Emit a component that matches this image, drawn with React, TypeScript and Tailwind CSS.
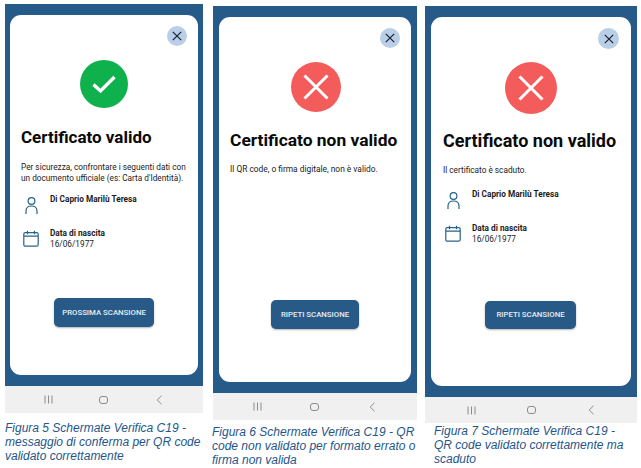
const PersonIcon = () => (
  <span className="mt-[2px] flex w-[16px] shrink-0 justify-center">
    <svg width="13" height="17" viewBox="0 0 13 17" fill="none" stroke="#2a6286" strokeWidth="1.2">
      <circle cx="6.5" cy="4" r="3.4" />
      <path d="M1 17v-3c0-3 2-5 5.5-5s5.5 2 5.5 5v3" />
    </svg>
  </span>
)

const CalendarIcon = () => (
  <svg width="16" height="17" viewBox="0 0 16 17" fill="none" stroke="#2a6286" strokeWidth="1.2" className="mt-[1px] shrink-0">
    <rect x="0.8" y="2.6" width="14.4" height="13.6" rx="1.5" />
    <path d="M0.8 6.2h14.4M4.5 0.8v3.4M11.5 0.8v3.4" />
  </svg>
)

const CheckMark = () => (
  <svg width="26" height="20" viewBox="0 0 26 20" fill="none" stroke="white" strokeWidth="3.4">
    <path d="M2.5 10.5l7 6.5L23.5 3" />
  </svg>
)

const CrossMark = () => (
  <svg width="26" height="26" viewBox="0 0 26 26" fill="none" stroke="white" strokeWidth="3">
    <path d="M1.5 1.5l23 23M24.5 1.5l-23 23" />
  </svg>
)

const CloseButton = ({ className }: { className: string }) => (
  <div className={`absolute flex items-center justify-center rounded-full bg-[#b9cfe8] ${className}`}>
    <svg width="10" height="10" viewBox="0 0 10 10" fill="none" stroke="#16202c" strokeWidth="1.2">
      <path d="M0.8 0.8l8.4 8.4M9.2 0.8l-8.4 8.4" />
    </svg>
  </div>
)

const NavBar = ({ className }: { className: string }) => (
  <div className={`grid grid-cols-3 items-center bg-[#f0f0f0] px-4 ${className}`}>
    <svg width="9" height="9" viewBox="0 0 9 9" stroke="#8b8b8b" strokeWidth="1" className="justify-self-center">
      <path d="M1 0.5v8M4.5 0.5v8M8 0.5v8" />
    </svg>
    <div className="h-[8px] w-[9px] justify-self-center rounded-[3px] border border-[#8b8b8b]" />
    <svg width="7" height="10" viewBox="0 0 7 10" fill="none" stroke="#8b8b8b" strokeWidth="1" className="justify-self-center">
      <path d="M5.5 0.8L1.2 5l4.3 4.2" />
    </svg>
  </div>
)

const InfoRows = ({ className }: { className: string }) => (
  <div className={`font-['Roboto',sans-serif] text-[8.25px] leading-[11px] text-[#1c1c1c] ${className}`}>
    <div className="flex items-start gap-[11px]">
      <PersonIcon />
      <p className="-mt-[1px] font-bold">Di Caprio Marilù Teresa</p>
    </div>
    <div className="mt-[15px] flex items-start gap-[11px]">
      <CalendarIcon />
      <div className="-mt-[1px]">
        <p className="font-bold">Data di nascita</p>
        <p>16/06/1977</p>
      </div>
    </div>
  </div>
)

const ActionButton = ({ label, className }: { label: string; className: string }) => (
  <div className={`flex items-center justify-center rounded-[5px] bg-[#275a87] font-['Roboto',sans-serif] text-[7.8px] font-medium text-[#e8eef4] shadow-[0_1px_2px_rgba(0,0,0,0.3)] ${className}`}>
    {label}
  </div>
)

const Caption = ({ children, className }: { children: React.ReactNode; className: string }) => (
  <p className={`font-['Liberation_Sans',sans-serif] text-[12px] leading-[14px] italic text-[#24558a] ${className}`}>
    {children}
  </p>
)

export default function App() {
  return (
    <div className="flex h-[468px] w-[641px] items-start overflow-hidden bg-white">
      <div className="ml-[5px] mt-[4px] w-[198px]">
        <div className="h-[382px] bg-[#265a88] px-[5px] pt-[11px]">
          <div className="relative flex h-[360px] flex-col rounded-[11px] bg-white pl-[11px]">
            <CloseButton className="right-[11px] top-[11px] h-[20px] w-[20px]" />
            <div className="ml-[59px] mt-[45px] flex h-[48px] w-[48px] items-center justify-center rounded-full bg-[#0fb14c]">
              <CheckMark />
            </div>
            <h1 className="mt-[17px] font-['Roboto',sans-serif] text-[17px] leading-[24px] font-bold whitespace-nowrap text-[#0a0a0a]">
              Certificato valido
            </h1>
            <p className="mt-[13px] font-['Roboto',sans-serif] text-[8.25px] leading-[11px] whitespace-nowrap text-[#222]">
              Per sicurezza, confrontare i seguenti dati con
              <br />
              un documento ufficiale (es: Carta d'Identità).
            </p>
            <InfoRows className="ml-[2px] mt-[11px]" />
            <ActionButton label="PROSSIMA SCANSIONE" className="ml-[33px] mt-[48px] h-[29px] w-[100px]" />
          </div>
        </div>
        <NavBar className="h-[27px]" />
        <Caption className="mt-[8px] w-[200px]">
          Figura 5 Schermate Verifica C19 - messaggio di conferma per QR code validato correttamente
        </Caption>
      </div>

      <div className="ml-[10px] mt-[6px] w-[204px]">
        <div className="h-[387px] bg-[#265a88] px-[6px] pt-[11px]">
          <div className="relative flex h-[365px] flex-col rounded-[11px] bg-white pl-[11px]">
            <CloseButton className="right-[11px] top-[11px] h-[20px] w-[20px]" />
            <div className="ml-[61px] mt-[45px] flex h-[50px] w-[50px] items-center justify-center rounded-full bg-[#f45b5b]">
              <CrossMark />
            </div>
            <h1 className="mt-[16px] font-['Roboto',sans-serif] text-[17.4px] leading-[25px] font-bold whitespace-nowrap text-[#0a0a0a]">
              Certificato non valido
            </h1>
            <p className="mt-[11px] font-['Roboto',sans-serif] text-[8.4px] leading-[11px] text-[#222]">
              Il QR code, o firma digitale, non è valido.
            </p>
            <ActionButton label="RIPETI SCANSIONE" className="ml-[41px] mt-[125px] h-[29px] w-[88px]" />
          </div>
        </div>
        <NavBar className="h-[27px]" />
        <Caption className="-ml-[1px] mt-[5px] w-[205px]">
          Figura 6 Schermate Verifica C19 - QR code non validato per formato errato o firma non valida
        </Caption>
      </div>

      <div className="ml-[8px] mt-[6px] w-[212px]">
        <div className="h-[391px] bg-[#265a88] px-[6px] pt-[11px]">
          <div className="relative flex h-[369px] flex-col rounded-[11px] bg-white pl-[12px]">
            <CloseButton className="right-[12px] top-[11px] h-[21px] w-[21px]" />
            <div className="ml-[62px] mt-[45px] flex h-[52px] w-[52px] items-center justify-center rounded-full bg-[#f45b5b]">
              <CrossMark />
            </div>
            <h1 className="mt-[14px] font-['Roboto',sans-serif] text-[18px] leading-[26px] font-bold whitespace-nowrap text-[#0a0a0a]">
              Certificato non valido
            </h1>
            <p className="mt-[11px] font-['Roboto',sans-serif] text-[8.25px] leading-[11px] text-[#222]">
              Il certificato è scaduto.
            </p>
            <InfoRows className="ml-[2px] mt-[14px]" />
            <ActionButton label="RIPETI SCANSIONE" className="ml-[42px] mt-[56px] h-[28px] w-[91px]" />
          </div>
        </div>
        <NavBar className="h-[26px]" />
        <Caption className="ml-[9px] mt-[1px] w-[190px]">
          Figura 7 Schermate Verifica C19 - QR code validato correttamente ma scaduto
        </Caption>
      </div>
    </div>
  )
}
